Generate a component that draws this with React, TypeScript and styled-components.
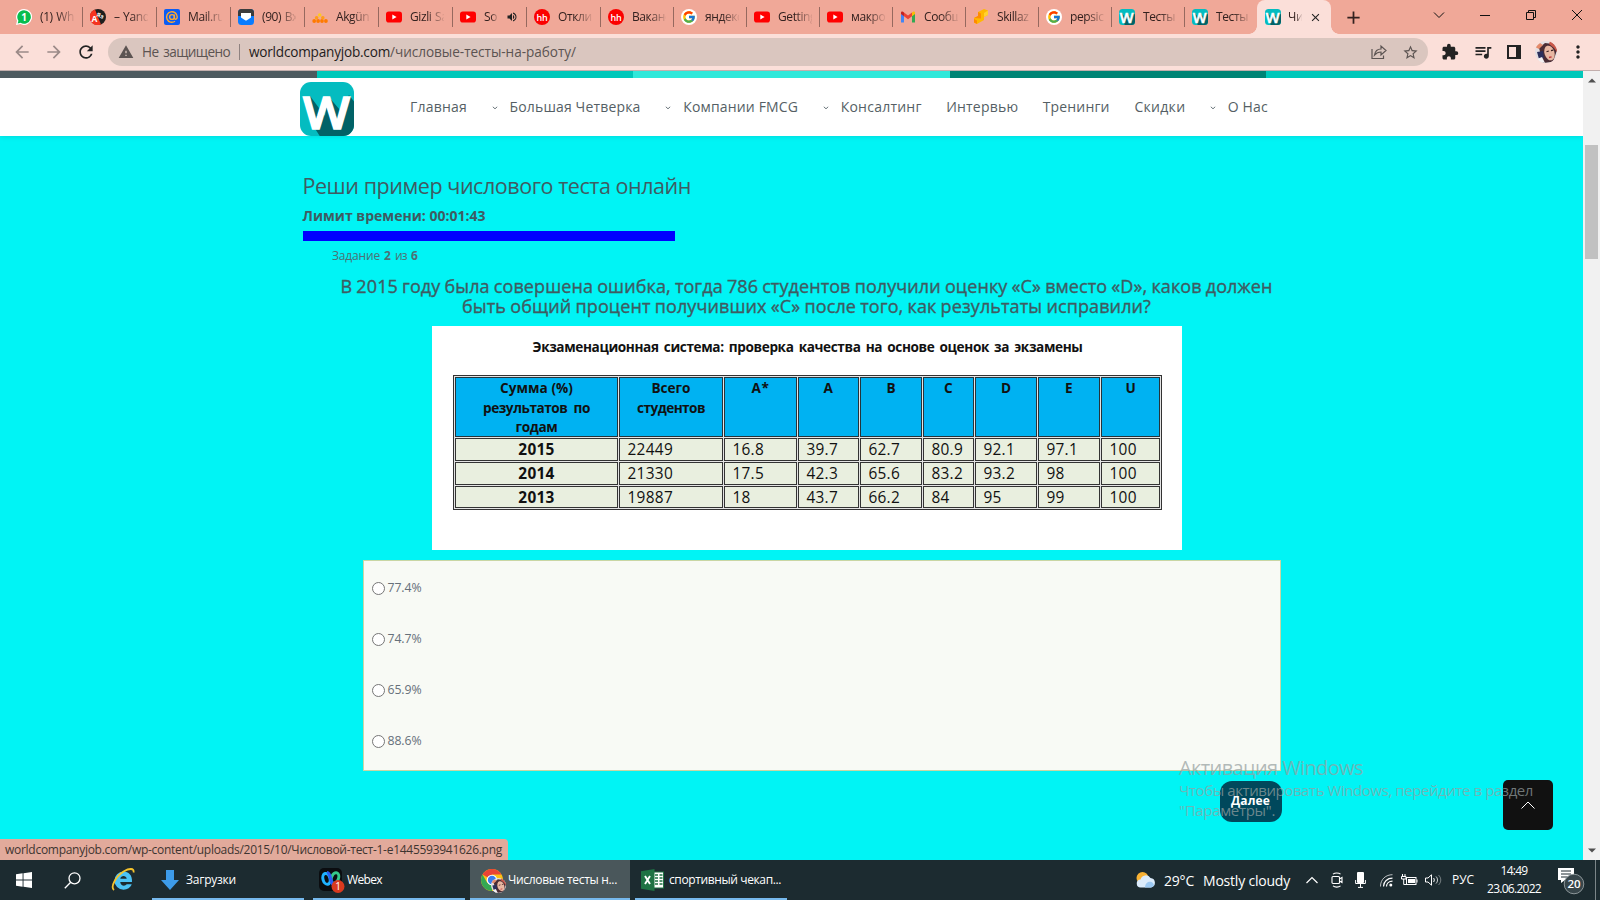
import React, { useLayoutEffect, useRef, useState } from "react";
import styled, { createGlobalStyle } from "styled-components";
import {
  MdArrowBack, MdArrowForward, MdRefresh, MdWarning, MdStarBorder,
  MdExtension, MdQueueMusic, MdMoreVert, MdVolumeUp, MdClose, MdAdd,
} from "react-icons/md";
import { FcGoogle } from "react-icons/fc";

const ui = `"Open Sans", "Noto Sans", sans-serif`;

const Global = createGlobalStyle`
  * { box-sizing: border-box; }
  body { margin: 0; overflow: hidden; font-family: ${ui}; }
  svg { display: block; flex: none; }
`;

/* ---------- text of a given width ---------- */
const FitSpan = styled.span<{ $w: number }>`
  display: block;
  flex: none;
  width: ${(p) => p.$w}px;
  white-space: nowrap;
`;
const FitInner = styled.span`
  display: inline-block;
  white-space: pre;
`;
function Fit({ w, children }: { w: number; children: string }) {
  const ref = useRef<HTMLSpanElement>(null);
  const [ls, setLs] = useState(0);
  useLayoutEffect(() => {
    const el = ref.current;
    if (el) setLs((w - el.getBoundingClientRect().width) / children.length);
  }, []);
  return (
    <FitSpan $w={w}>
      <FitInner ref={ref} style={{ letterSpacing: `${ls}px` }}>{children}</FitInner>
    </FitSpan>
  );
}

const Screen = styled.div`
  width: 1600px;
  height: 900px;
  display: flex;
  flex-direction: column;
  overflow: hidden;
  background: #00f4f5;
`;

/* ---------- tab strip ---------- */
const TabStrip = styled.div`
  height: 34px;
  flex: none;
  display: flex;
  padding-left: 9px;
  background: #f0a898;
`;
const Tab = styled.div<{ $w: number; $line: boolean }>`
  width: ${(p) => p.$w}px;
  flex: none;
  height: 34px;
  display: flex;
  align-items: center;
  padding-left: 7px;
  gap: 8px;
  background: ${(p) => (p.$line ? "linear-gradient(#96695f, #96695f) right 0 top 7px / 1px 20px no-repeat" : "none")};
  color: #33211f;
`;
const ActiveTab = styled(Tab)`
  position: relative;
  background: #fbdfd9;
  border-radius: 8px 8px 0 0;
  padding-left: 8px;
  gap: 7px;
  &::before, &::after {
    content: "";
    position: absolute;
    bottom: 0;
    width: 8px;
    height: 8px;
  }
  &::before { left: -8px; background: radial-gradient(circle at 0 0, transparent 7.5px, #fbdfd9 8px); }
  &::after { right: -8px; background: radial-gradient(circle at 100% 0, transparent 7.5px, #fbdfd9 8px); }
`;
const TabText = styled.span<{ $w: number }>`
  width: ${(p) => p.$w}px;
  flex: none;
  overflow: hidden;
  white-space: nowrap;
  font-size: 12px;
  letter-spacing: -0.4px;
  word-spacing: 0.8px;
  line-height: 20px;
  mask-image: linear-gradient(to right, #000 50%, transparent 105%);
`;
const WinControls = styled.div`
  margin-left: auto;
  display: flex;
  height: 29px;
  align-items: center;
`;
const WinButton = styled.div`
  width: 46px;
  display: flex;
  justify-content: center;
`;
const NewTab = styled.div`
  margin-left: 12px;
  display: flex;
  align-items: center;
  color: #33211f;
`;

/* ---------- toolbar ---------- */
const Toolbar = styled.div`
  height: 37px;
  flex: none;
  display: flex;
  align-items: center;
  padding-left: 12px;
  background: #fbdfd9;
  border-bottom: 1px solid #c2aeac;
  color: #232323;
`;
const NavIcons = styled.div`
  display: flex;
  gap: 12px;
  width: 96px;
  flex: none;
`;
const Dim = styled.span`
  display: flex;
  color: #9b8a88;
`;
const Omnibox = styled.div`
  width: 1320px;
  height: 28px;
  flex: none;
  border-radius: 14px;
  background: #dac6bf;
  display: flex;
  align-items: center;
  padding-left: 10px;
  font-size: 13.6px;
  line-height: 20px;
  color: #5c5452;
`;
const OmniText = styled.span`
  margin-left: 8px;
  word-spacing: 2px;
`;
const OmniSep = styled.span`
  width: 1px;
  height: 16px;
  margin: 0 9px;
  background: #8f8280;
`;
const Url = styled.span`
  display: flex;
  b { font-weight: 400; color: #1f1c1c; }
`;
const OmniEnd = styled.span`
  margin-left: auto;
  display: flex;
  align-items: center;
  gap: 15px;
  padding-right: 9.5px;
  color: #5c5452;
`;
const ToolIcons = styled.div`
  display: flex;
  align-items: center;
  gap: 14px;
  padding-left: 13px;
`;
const MenuDots = styled.span`
  margin-left: -3px;
`;

/* ---------- page ---------- */
const Viewport = styled.div`
  position: relative;
  height: 789px;
  flex: none;
  display: flex;
`;
const Page = styled.div`
  width: 1583px;
  flex: none;
`;
const Stripes = styled.div`
  height: 7px;
  display: grid;
  grid-template-columns: repeat(5, 1fr);
`;
const Stripe = styled.div<{ $c: string }>`
  background: ${(p) => p.$c};
`;
const Header = styled.div`
  height: 58px;
  display: flex;
  align-items: center;
  padding-left: 300px;
  background: #fff;
  box-shadow: 0 1px 5px rgba(0, 0, 0, 0.1);
`;
const LogoWrap = styled.div`
  padding-top: 4px;
  width: 110px;
  flex: none;
`;
const Menu = styled.div`
  display: flex;
  align-items: center;
  font-size: 14px;
  line-height: 20px;
  color: #555f65;
`;
const MenuItem = styled.div<{ $gap: number }>`
  margin-left: ${(p) => p.$gap}px;
  display: flex;
  align-items: center;
`;
const Caret = styled.svg`
  margin: 2px 12px 0 0;
`;
const Quiz = styled.div`
  padding: 36px 0 0 302.5px;
  color: #3f5b62;
`;
const Title = styled.h2`
  margin: 0 0 6px;
  font-weight: 400;
  font-size: 21.5px;
  line-height: 28px;
`;
const Timer = styled.div`
  font-weight: 700;
  font-size: 14px;
  line-height: 20px;
`;
const Progress = styled.div`
  margin: 5px 0 5px .5px;
  width: 372px;
  height: 10px;
  background: #00f;
`;
const TaskNo = styled.div`
  display: flex;
  padding-left: 29.5px;
  font-size: 12px;
  line-height: 20px;
  color: #4d7074;
`;
const Strong = styled.b`
  margin: 0 4px;
`;
const Question = styled.div`
  margin-top: 10px;
  width: 1008px;
  display: flex;
  flex-direction: column;
  align-items: center;
  font-weight: 500;
  font-size: 18px;
  line-height: 20px;
  word-spacing: -0.6px;
  -webkit-text-stroke: 0.35px currentColor;
`;
const Sheet = styled.div`
  margin: 10px 0 0 129.5px;
  width: 750px;
  height: 224px;
  padding: 11px 20px 0 21px;
  background: #fff;
  color: #111;
`;
const SheetTitle = styled.div`
  display: flex;
  justify-content: center;
  font-weight: 700;
  font-size: 13.6px;
  line-height: 20px;
  word-spacing: 2px;
  margin-bottom: 18px;
`;
const Grid = styled.div`
  width: 709px;
  height: 135px;
  border: 1px solid #333;
  padding: 1px;
  display: grid;
  grid-template-columns: 163px 104px 73px 61px 62px 51px 62px 62px 59px;
  grid-template-rows: 60px 23px 23px 22px;
  gap: 1px;
  background: #e4e4e4;
`;
const HeadCell = styled.div`
  border: 1px solid #24343c;
  background: #00b2f2;
  display: flex;
  flex-direction: column;
  align-items: center;
  font-weight: 700;
  font-size: 13.6px;
  line-height: 19.6px;
`;
const Cell = styled.div<{ $head?: boolean }>`
  border: 1px solid #333;
  background: #e9efdf;
  display: flex;
  padding-left: ${(p) => (p.$head ? 0 : 7.5)}px;
  justify-content: ${(p) => (p.$head ? "center" : "flex-start")};
  font-weight: ${(p) => (p.$head ? 700 : 400)};
  font-size: 15.4px;
  line-height: 22px;
`;
const Answers = styled.div`
  margin: 10px 0 0 60.5px;
  width: 918px;
  height: 211px;
  padding: 17px 0 0 8px;
  border: 1px solid #c9d6a4;
  background: #f8faf5;
`;
const Answer = styled.label`
  display: flex;
  align-items: center;
  height: 20px;
  margin-bottom: 31px;
  font-size: 12.3px;
  line-height: 20px;
  color: #66707a;
`;
const Radio = styled.span`
  width: 13px;
  height: 13px;
  flex: none;
  margin: 1px 2.5px 0 0;
  border: 1px solid #767676;
  border-radius: 50%;
  background: #fff;
`;
const Next = styled.div`
  margin: 10px 0 0 917.5px;
  width: 62px;
  height: 41px;
  border-radius: 12px;
  background: #00485c;
  color: #fff;
  font-weight: 700;
  font-size: 12px;
  line-height: 39px;
  padding-left: 11px;
`;
const ToTop = styled.div`
  position: absolute;
  left: 1503px;
  top: 709px;
  width: 50px;
  height: 50px;
  border-radius: 5px;
  background: #111;
  display: flex;
  align-items: center;
  justify-content: center;
`;
const Watermark = styled.div`
  position: absolute;
  left: 1179px;
  top: 683px;
  color: rgba(150, 160, 160, 0.72);
  font-size: 15px;
  line-height: 20px;
`;
const WatermarkTitle = styled.div`
  font-size: 20px;
  line-height: 28px;
  margin-bottom: -2px;
`;
const StatusBubble = styled.div`
  position: absolute;
  left: 0;
  bottom: 0;
  width: 508px;
  height: 21px;
  padding-left: 5px;
  border-radius: 0 4px 0 0;
  background: #e2aa9b;
  color: #3e3531;
  font-size: 12px;
  line-height: 22px;
`;
const Scrollbar = styled.div`
  width: 17px;
  background: #f1f1f1;
  display: flex;
  flex-direction: column;
  align-items: center;
  padding: 7px 0;
`;
const Thumb = styled.div`
  width: 13px;
  height: 114px;
  margin-top: 62px;
  margin-bottom: auto;
  background: #c1c1c1;
`;

/* ---------- taskbar ---------- */
const Taskbar = styled.div`
  height: 40px;
  flex: none;
  display: flex;
  background: #1c2b30;
  color: #fff;
  font-size: 12px;
  line-height: 20px;
`;
const Launcher = styled.div<{ $w: number }>`
  width: ${(p) => p.$w}px;
  flex: none;
  display: flex;
  align-items: center;
  justify-content: center;
`;
const Task = styled.div<{ $w: number; $gap: number; $active?: boolean }>`
  width: ${(p) => p.$w}px;
  flex: none;
  margin-left: ${(p) => p.$gap}px;
  display: flex;
  align-items: center;
  padding-top: 2px;
  border-bottom: 2px solid #76b9ed;
  background: ${(p) => (p.$active ? "#4a575b" : "transparent")};
`;
const TaskIcon = styled.span<{ $l: number; $w: number }>`
  margin-left: ${(p) => p.$l}px;
  width: ${(p) => p.$w}px;
  flex: none;
`;
const Tray = styled.div`
  margin-left: auto;
  display: flex;
  align-items: center;
  width: 465px;
  flex: none;
`;
const Weather = styled.div`
  display: flex;
  gap: 9px;
  font-size: 14px;
  margin: 2px 16px 0 7px;
`;
const TrayIcon = styled.span<{ $r: number }>`
  margin-right: ${(p) => p.$r}px;
`;
const Clock = styled.div`
  margin-left: 13px;
  width: 54px;
  display: flex;
  flex-direction: column;
  align-items: center;
  line-height: 18px;
`;
const ShowDesktop = styled.div`
  margin-left: auto;
  width: 5px;
  height: 40px;
  border-left: 1px solid #7b8588;
`;
const ChromeBox = styled.span`
  position: relative;
  display: block;
  width: 24px;
`;
const ChromeFace = styled.span`
  position: absolute;
  left: 10px;
  top: 9px;
`;
const Notify = styled.span`
  margin-left: 16px;
`;

/* ---------- drawings ---------- */
const LogoW = ({ size, r = 11 }: { size: number; r?: number }) => (
  <svg width={size} height={size} viewBox="0 0 54 54">
    <defs>
      <clipPath id={`lw${size}`}><rect width="54" height="54" rx={r} /></clipPath>
    </defs>
    <g clipPath={`url(#lw${size})`}>
      <rect width="54" height="54" fill="#04bcc0" />
      <path d="M10 14 L25 34 L28 14 L40 28 L49 13 L56 22 V56 H21 L14 45 Z" fill="#026267" />
      <text x="26.500" y="46.800" textAnchor="middle" fontFamily="Open Sans" fontWeight="600" fontSize="46" fill="#fff" stroke="#fff" strokeWidth="1.600" textLength="47" lengthAdjust="spacingAndGlyphs">W</text>
    </g>
  </svg>
);
const Svg16 = ({ children }: { children: React.ReactNode }) => (
  <svg width="16" height="16" viewBox="0 0 16 16">{children}</svg>
);
const WhatsApp = () => (
  <Svg16>
    <path d="M8 0a8 8 0 1 1-3.600 15.100L0 16l1-4.200A8 8 0 0 1 8 0z" fill="#fff" />
    <path d="M8 1.200A6.800 6.800 0 1 1 4.500 13.800L1.700 14.400l.7-2.700A6.800 6.800 0 0 1 8 1.200z" fill="#07bd4e" />
    <text x="8" y="11.700" textAnchor="middle" fontFamily="Open Sans" fontSize="10" fontWeight="700" fill="#fff">1</text>
  </Svg16>
);
const Yandex = () => (
  <Svg16>
    <circle cx="8" cy="8" r="8" fill="#1e1e1e" />
    <path d="M5 .6A8 8 0 1 0 11 15.400z" fill="#f5341f" />
    <text x="1.400" y="13" fontFamily="Open Sans" fontSize="8.500" fontWeight="700" fill="#fff">A</text>
    <text x="6.500" y="8" fontFamily="Open Sans" fontSize="6" fontWeight="700" fill="#fff" transform="rotate(20 8 6)">Яз</text>
  </Svg16>
);
const MailRu = () => (
  <Svg16>
    <rect width="16" height="16" rx="2" fill="#0a5cf5" />
    <circle cx="8" cy="8" r="2.400" fill="none" stroke="#ffa930" strokeWidth="1.400" />
    <path d="M10.400 5.600v3.200c0 2 2.800 2 2.800-.8A5.300 5.300 0 1 0 11 12.300" fill="none" stroke="#ffa930" strokeWidth="1.400" />
  </Svg16>
);
const Inbox = () => (
  <Svg16>
    <rect width="16" height="16" rx="3.500" fill="#0a7cff" />
    <path d="M0 7V3.500A3.500 3.500 0 0 1 3.500 0h9A3.500 3.500 0 0 1 16 3.500V7z" fill="#3c3c3c" />
    <path d="M3 4h10V8.500L8.500 11.500h-1L3 8.500z" fill="#fff" />
  </Svg16>
);
const Dots = () => (
  <Svg16>
    <g fill="#ff7a00">
      <circle cx="2.200" cy="12" r="1.900" /><circle cx="6.100" cy="12" r="1.900" /><circle cx="10" cy="12" r="1.900" /><circle cx="13.900" cy="12" r="1.900" />
      <circle cx="4.600" cy="8.800" r="1.800" fill="#ff9c1a" /><circle cx="10.800" cy="8.800" r="1.800" fill="#ff9c1a" />
      <circle cx="7.700" cy="6" r="1.800" fill="#ffc91f" />
    </g>
  </Svg16>
);
const YouTube = () => (
  <Svg16>
    <rect y="2.500" width="16" height="11" rx="2.800" fill="#f00" />
    <path d="M6.300 5.600v4.800L10.600 8z" fill="#fff" />
  </Svg16>
);
const HeadHunter = () => (
  <Svg16>
    <circle cx="8" cy="8" r="8" fill="#fb0000" />
    <text x="8" y="11.500" textAnchor="middle" fontFamily="Open Sans" fontSize="9" fontWeight="600" letterSpacing="-0.3" fill="#fff">hh</text>
  </Svg16>
);
const GoogleRound = styled.span`
  width: 16px;
  height: 16px;
  flex: none;
  border-radius: 50%;
  background: #fff;
  padding: 1px;
`;
const Google = () => <GoogleRound><FcGoogle size={14} /></GoogleRound>;
const Gmail = () => (
  <Svg16>
    <path d="M1 13.500V4.500l3 2.200v6.800z" fill="#4285f4" />
    <path d="M12 13.500V6.700l3-2.200v9z" fill="#34a853" />
    <path d="M12 3.500l1-.8c1-.6 2 0 2 1v1.300l-3 2.200z" fill="#fbbc04" />
    <path d="M4 3.500L8 6.600l4-3.100v3.700l-4 3-4-3z" fill="#ea4335" />
    <path d="M4 3.500l-1-.8c-1-.6-2 0-2 1v1.300l3 2.200z" fill="#c5221f" />
  </Svg16>
);
const Skillaz = () => (
  <Svg16>
    <path d="M5 3l6-3 4 1.500V6l-4 2v3l-7 4-3-1.500V9l4-2z" fill="#ffb800" />
    <path d="M5 3l3 1.500v5L1 9l4-2zM1 10l3 1.500V15l-3-1.500z" fill="#ff8a00" />
    <path d="M11 4l4-2.500V6l-4 2z" fill="#ffd22e" />
  </Svg16>
);
const FaceArt = ({ size }: { size: number }) => (
  <svg width={size} height={size} viewBox="0 0 22 22">
    <defs><clipPath id={`fa${size}`}><circle cx="11" cy="11" r="11" /></clipPath></defs>
    <g clipPath={`url(#fa${size})`}>
      <rect width="22" height="22" fill="#e4dfe2" />
      <path d="M4 7l6-5 8 1 4 6-4 12-10 1z" fill="#4a2c34" />
      <path d="M2 11l6-1 1 7-5 1z" fill="#2b2f5c" />
      <path d="M0 6l5-4 3 2-4 4z" fill="#e58a6a" />
      <path d="M2 18l5-2 3 6H3z" fill="#f4f1f2" />
      <ellipse cx="14.500" cy="12" rx="5" ry="7.500" transform="rotate(-18 14.500 12)" fill="#e8b7a2" />
      <path d="M11.500 10.800l2.300-.8M16 9.600l2.300-.5" stroke="#3a2222" strokeWidth="1.100" />
      <path d="M14 16.500l2.600-.6" stroke="#c0393d" strokeWidth="1.300" />
      <path d="M15 0l7 5v6l-3-4-5-4z" fill="#c9584a" />
    </g>
  </svg>
);

type TabInfo = { icon: React.ReactNode; text: string; w: number; muted?: boolean };
const tabs: TabInfo[] = [
  { icon: <WhatsApp />, text: "(1) Wha", w: 74 },
  { icon: <Yandex />, text: "– Yande", w: 74 },
  { icon: <MailRu />, text: "Mail.ru:", w: 74 },
  { icon: <Inbox />, text: "(90) Вхо", w: 74 },
  { icon: <Dots />, text: "Akgün ", w: 74 },
  { icon: <YouTube />, text: "Gizli Sak", w: 74 },
  { icon: <YouTube />, text: "Son", w: 74, muted: true },
  { icon: <HeadHunter />, text: "Отклик", w: 74 },
  { icon: <HeadHunter />, text: "Ваканс", w: 73 },
  { icon: <Google />, text: "яндекс", w: 73 },
  { icon: <YouTube />, text: "Getting", w: 73 },
  { icon: <YouTube />, text: "макрос", w: 73 },
  { icon: <Gmail />, text: "Сообщ", w: 73 },
  { icon: <Skillaz />, text: "Skillaz", w: 73 },
  { icon: <Google />, text: "pepsico", w: 73 },
  { icon: <LogoW size={16} r={12} />, text: "Тесты ", w: 73 },
  { icon: <LogoW size={16} r={12} />, text: "Тесты ", w: 72 },
];

const menu = [
  { t: "Главная", w: 57, gap: 0, caret: false },
  { t: "Большая Четверка", w: 131, gap: 24.5, caret: true },
  { t: "Компании FMCG", w: 115, gap: 24.7, caret: true },
  { t: "Консалтинг", w: 81, gap: 24.5, caret: true },
  { t: "Интервью", w: 72, gap: 24.5, caret: false },
  { t: "Тренинги", w: 67, gap: 24.5, caret: false },
  { t: "Скидки", w: 51, gap: 24.7, caret: false },
  { t: "О Нас", w: 40, gap: 24.4, caret: true },
];

const heads: { t: string; w: number }[][] = [
  [{ t: "Сумма (%)", w: 73 }, { t: "результатов  по", w: 107 }, { t: "годам", w: 42 }],
  [{ t: "Всего", w: 39 }, { t: "студентов", w: 68 }],
  [{ t: "A*", w: 18 }], [{ t: "A", w: 10 }], [{ t: "B", w: 9 }], [{ t: "C", w: 9 }],
  [{ t: "D", w: 10 }], [{ t: "E", w: 8 }], [{ t: "U", w: 10 }],
];
const rows = [
  ["2015", "22449", "16.8", "39.7", "62.7", "80.9", "92.1", "97.1", "100"],
  ["2014", "21330", "17.5", "42.3", "65.6", "83.2", "93.2", "98", "100"],
  ["2013", "19887", "18", "43.7", "66.2", "84", "95", "99", "100"],
];
const numWidth = (s: string) => (s.includes(".") ? 31.5 : s.length * 9.1);

export default function App() {
  return (
    <Screen>
      <Global />
      <TabStrip>
        {tabs.map((t, i) => (
          <Tab key={i} $w={t.w} $line={i < tabs.length - 1}>
            {t.icon}
            <TabText $w={t.muted ? 14 : 34}>{t.text}</TabText>
            {t.muted && <MdVolumeUp size={12} color="#222" />}
          </Tab>
        ))}
        <ActiveTab $w={74} $line={false}>
          <LogoW size={16} r={12} />
          <TabText $w={14}>Чис</TabText>
          <MdClose size={13} color="#222" />
        </ActiveTab>
        <NewTab><MdAdd size={21} /></NewTab>
        <WinControls>
          <WinButton><svg width="12" height="12" viewBox="0 0 12 12"><path d="M1 3.500l5 5 5-5" fill="none" stroke="#111" /></svg></WinButton>
          <WinButton><svg width="10" height="12" viewBox="0 0 10 12"><path d="M0 6.500h10" stroke="#111" /></svg></WinButton>
          <WinButton><svg width="10" height="10" viewBox="0 0 10 10"><path d="M.5 2.500h7v7h-7zM2.500 2.500v-2h7v7h-2" fill="none" stroke="#111" /></svg></WinButton>
          <WinButton><svg width="10" height="10" viewBox="0 0 10 10"><path d="M0 0l10 10M10 0L0 10" stroke="#111" /></svg></WinButton>
        </WinControls>
      </TabStrip>

      <Toolbar>
        <NavIcons>
          <Dim><MdArrowBack size={20} /></Dim>
          <Dim><MdArrowForward size={20} /></Dim>
          <MdRefresh size={20} />
        </NavIcons>
        <Omnibox>
          <MdWarning size={16} />
          <OmniText><Fit w={88}>Не защищено</Fit></OmniText>
          <OmniSep />
          <Url>
            <b><Fit w={141}>worldcompanyjob.com</Fit></b>
            <Fit w={186}>/числовые-тесты-на-работу/</Fit>
          </Url>
          <OmniEnd>
            <svg width="16" height="16" viewBox="0 0 16 16" fill="none" stroke="currentColor" strokeWidth="1.200">
              <path d="M1 5v9.500h11.500v-3" /><path d="M3.500 11C4.200 7 6.500 5 10 5V2l5 4.500L10 11V8C7.500 8 5.500 8.700 3.500 11z" />
            </svg>
            <MdStarBorder size={17} />
          </OmniEnd>
        </Omnibox>
        <ToolIcons>
          <MdExtension size={18} />
          <MdQueueMusic size={20} />
          <svg width="14" height="14" viewBox="0 0 14 14"><path d="M1 1h12v12H1z" fill="none" stroke="currentColor" strokeWidth="2" /><path d="M9 1h4v12H9z" fill="currentColor" /></svg>
          <FaceArt size={22} />
          <MenuDots><MdMoreVert size={20} /></MenuDots>
        </ToolIcons>
      </Toolbar>

      <Viewport>
        <Page>
          <Stripes>
            <Stripe $c="#4d5a5f" /><Stripe $c="#00c8ba" /><Stripe $c="#30e8da" /><Stripe $c="#008475" /><Stripe $c="#00c8ba" />
          </Stripes>
          <Header>
            <LogoWrap><LogoW size={54} /></LogoWrap>
            <Menu>
              {menu.map((m) => (
                <MenuItem key={m.t} $gap={m.gap}>
                  {m.caret && (
                    <Caret width="6" height="4" viewBox="0 0 6 4"><path d="M.8.8L3 2.800 5.200.8" fill="none" stroke="#5b676d" strokeWidth=".9" /></Caret>
                  )}
                  <Fit w={m.w}>{m.t}</Fit>
                </MenuItem>
              ))}
            </Menu>
          </Header>
          <Quiz>
            <Title><Fit w={388.5}>Реши пример числового теста онлайн</Fit></Title>
            <Timer><Fit w={183}>Лимит времени: 00:01:43</Fit></Timer>
            <Progress />
            <TaskNo>
              <Fit w={48}>Задание</Fit><Strong>2</Strong><Fit w={12}>из</Fit><Strong>6</Strong>
            </TaskNo>
            <Question>
              <Fit w={932}>В 2015 году была совершена ошибка, тогда 786 студентов получили оценку «C» вместо «D», каков должен</Fit>
              <Fit w={689}>быть общий процент получивших «C» после того, как результаты исправили?</Fit>
            </Question>
            <Sheet>
              <SheetTitle><Fit w={550}>Экзаменационная система: проверка качества на основе оценок за экзамены</Fit></SheetTitle>
              <Grid>
                {heads.map((h, i) => (
                  <HeadCell key={i}>{h.map((l) => <Fit key={l.t} w={l.w}>{l.t}</Fit>)}</HeadCell>
                ))}
                {rows.map((r) => r.map((v, i) => (
                  <Cell key={r[0] + i} $head={i === 0}><Fit w={numWidth(v)}>{v}</Fit></Cell>
                )))}
              </Grid>
            </Sheet>
            <Answers>
              {["77.4%", "74.7%", "65.9%", "88.6%"].map((a) => (
                <Answer key={a}><Radio /><Fit w={34}>{a}</Fit></Answer>
              ))}
            </Answers>
            <Next><Fit w={39}>Далее</Fit></Next>
          </Quiz>
        </Page>
        <Scrollbar>
          <svg width="8" height="5" viewBox="0 0 8 5"><path d="M0 4.500L4 .5l4 4z" fill="#505050" /></svg>
          <Thumb />
          <svg width="8" height="5" viewBox="0 0 8 5"><path d="M0 .5l4 4 4-4z" fill="#505050" /></svg>
        </Scrollbar>
        <ToTop>
          <svg width="14" height="8" viewBox="0 0 14 8"><path d="M.5 7.500L7 1l6.500 6.500" fill="none" stroke="#fff" /></svg>
        </ToTop>
        <Watermark>
          <WatermarkTitle><Fit w={184}>Активация Windows</Fit></WatermarkTitle>
          <Fit w={354}>Чтобы активировать Windows, перейдите в раздел</Fit>
          <Fit w={96}>"Параметры".</Fit>
        </Watermark>
        <StatusBubble><Fit w={497}>worldcompanyjob.com/wp-content/uploads/2015/10/Числовой-тест-1-e1445593941626.png</Fit></StatusBubble>
      </Viewport>

      <Taskbar>
        <Launcher $w={48}>
          <svg width="16" height="16" viewBox="0 0 16 16" fill="#fff"><path d="M0 2.200L6.600 1.300v6.200H0zM7.500 1.200L16 0v7.500H7.500zM0 8.400h6.600v6.300L0 13.800zM7.500 8.400H16V16l-8.500-1.200z" /></svg>
        </Launcher>
        <Launcher $w={48}>
          <svg width="17" height="17" viewBox="0 0 17 17" fill="none" stroke="#fff" strokeWidth="1.300"><circle cx="10.500" cy="6.300" r="5.500" /><path d="M6.700 10.200L.8 16.200" /></svg>
        </Launcher>
        <Launcher $w={54}>
          <svg width="24" height="24" viewBox="0 0 24 24">
            <path d="M4 14H21C21.500 7 17.500 3.500 12.500 3.500A9 9 0 0 0 12.500 21.700C16.500 21.700 19.500 19.500 20.700 16.300H15.700C14 18.800 9.500 18 9.200 14M9.300 10.700C9.800 7.200 15.300 7.200 15.700 10.700z" fill="#4cc3f5" fillRule="evenodd" />
            <path d="M3 22C-1 19 5 8 13 3.200C18 .3 23.500-.2 22.500 4.500" fill="none" stroke="#f5c32c" strokeWidth="1.800" />
          </svg>
        </Launcher>
        <Task $w={152} $gap={2}>
          <TaskIcon $l={9} $w={25}>
            <svg width="18" height="20" viewBox="0 0 18 20"><path d="M5 0h8v10h5l-9 10L0 10h5z" fill="#3d9be9" /></svg>
          </TaskIcon>
          <Fit w={50}>Загрузки</Fit>
        </Task>
        <Task $w={152} $gap={9}>
          <TaskIcon $l={6} $w={28}>
            <svg width="26" height="26" viewBox="0 0 26 26">
              <rect y="1" width="23" height="23" rx="5" fill="#0b0d10" />
              <ellipse cx="16" cy="11" rx="3.500" ry="5.500" fill="none" stroke="#35c98a" strokeWidth="3" transform="rotate(20 16 11)" />
              <ellipse cx="7.500" cy="12" rx="3.500" ry="5.500" fill="none" stroke="#1fb2ff" strokeWidth="3" transform="rotate(-15 7 12)" />
              <path d="M8 5.500c4 0 3 9 6 12" stroke="#2a5cf0" strokeWidth="3.200" fill="none" />
              <circle cx="19" cy="19.500" r="6.500" fill="#d93a1f" />
              <text x="19" y="23.300" textAnchor="middle" fontFamily="Open Sans" fontSize="10" fill="#fff">1</text>
            </svg>
          </TaskIcon>
          <Fit w={35}>Webex</Fit>
        </Task>
        <Task $w={160} $gap={5} $active>
          <TaskIcon $l={11} $w={27}>
            <ChromeBox>
              <svg width="22" height="22" viewBox="0 0 22 22">
                <circle cx="11" cy="11" r="11" fill="#fbc116" />
                <path d="M11 11L1.500 5.500A11 11 0 0 1 20.500 5.500H11z" fill="#ea4335" />
                <path d="M1.500 5.500L6.200 13.800 11 16l0 6A11 11 0 0 1 1.500 5.500z" fill="#34a853" />
                <circle cx="11" cy="11" r="5.300" fill="#fff" /><circle cx="11" cy="11" r="4.200" fill="#3b7ded" />
              </svg>
              <ChromeFace><FaceArt size={15} /></ChromeFace>
            </ChromeBox>
          </TaskIcon>
          <Fit w={109}>Числовые тесты н...</Fit>
        </Task>
        <Task $w={152} $gap={5}>
          <TaskIcon $l={6} $w={28}>
            <svg width="23" height="22" viewBox="0 0 23 22">
              <rect x="12" y="3" width="10.500" height="16" fill="#fff" stroke="#1f7244" />
              <path d="M14 6h3M18.500 6h3M14 9h3M18.500 9h3M14 12h3M18.500 12h3M14 15h3M18.500 15h3" stroke="#1f7244" strokeWidth="1.600" />
              <path d="M0 2.200L13.500 0v22L0 19.800z" fill="#1f7244" />
              <path d="M4 7l5 8M9 7l-5 8" stroke="#fff" strokeWidth="1.900" />
            </svg>
          </TaskIcon>
          <Fit w={112}>спортивный чекап...</Fit>
        </Task>
        <Tray>
          <svg width="22" height="20" viewBox="0 0 22 20">
            <circle cx="7.500" cy="8" r="6" fill="#f9b233" />
            <path d="M6 17.500a4 4 0 0 1-.5-8A5.500 5.500 0 0 1 15.500 8 4.800 4.800 0 0 1 16 17.500z" fill="#dcecfb" />
            <path d="M10 17.500c0-5 4-6.500 6.500-5.500s4 4.500-.5 5.500z" fill="#9cc9f2" />
          </svg>
          <Weather><Fit w={30}>29°C</Fit><Fit w={87}>Mostly cloudy</Fit></Weather>
          <TrayIcon $r={13}><svg width="12" height="8" viewBox="0 0 12 8"><path d="M.5 7L6 1.500 11.500 7" fill="none" stroke="#fff" strokeWidth="1.200" /></svg></TrayIcon>
          <TrayIcon $r={12}>
            <svg width="12" height="18" viewBox="0 0 12 18" fill="none" stroke="#fff" strokeWidth="1.100"><rect x="1" y="5.500" width="7.500" height="7" rx="1" /><path d="M8.500 8l2.500-1.500v5L8.500 10M2 3.200C4 1.500 7.500 1.500 9.500 3.200M2 14.800c2 1.700 5.500 1.700 7.500 0" /></svg>
          </TrayIcon>
          <TrayIcon $r={14}>
            <svg width="11" height="16" viewBox="0 0 11 16"><rect x="2" width="7" height="11" rx="1" fill="#fff" /><path d="M.6 8v3.500h9.800V8M5.500 12v3M3 15.400h5" fill="none" stroke="#fff" /></svg>
          </TrayIcon>
          <TrayIcon $r={8}>
            <svg width="13" height="13" viewBox="0 0 13 13" fill="none" stroke="#fff"><path d="M.5 12.500C.5 5 6 .7 12.500.7" opacity=".7" /><path d="M3.500 12.500c0-5 4-8.300 9-8.300M6.500 12.500c0-3 2.500-5.300 6-5.300" strokeWidth="1.200" /><circle cx="10.800" cy="11" r="1.500" fill="#fff" stroke="none" /></svg>
          </TrayIcon>
          <TrayIcon $r={7}>
            <svg width="17" height="12" viewBox="0 0 17 12" fill="none" stroke="#fff"><rect x="5.500" y="3.500" width="9.500" height="7" /><rect x="7" y="5" width="7" height="4" fill="#fff" stroke="none" /><path d="M16 5.500v3M1.500 0v2.500M4 0v2.500M.5 2.500h4.500v2.500h-4.500zM2.700 5v5.500h2.500" /></svg>
          </TrayIcon>
          <TrayIcon $r={10}>
            <svg width="17" height="12" viewBox="0 0 17 12" fill="none" stroke="#fff"><path d="M.5 4h2.500L6.500.8v10.400L3 8H.5z" /><path d="M8.500 4c1 1 1 3 0 4" /><path d="M11 2.500c2 2 2 5 0 7" opacity=".8" /><path d="M13.500 1c3 3 3 7 0 10" opacity=".4" /></svg>
          </TrayIcon>
          <Fit w={22}>РУС</Fit>
          <Clock><Fit w={27}>14:49</Fit><Fit w={54}>23.06.2022</Fit></Clock>
          <Notify>
            <svg width="28" height="32" viewBox="0 -1 28 32">
              <path d="M1 3h16v12H8l-4 3v-3H1z" fill="#fff" />
              <path d="M4 6h10M4 9h10M4 12h6" stroke="#1c2b30" />
              <circle cx="17" cy="19" r="9.800" fill="#37454a" stroke="#8b9598" />
              <text x="17" y="23.300" textAnchor="middle" fontFamily="Open Sans" fontSize="11.500" fontWeight="600" fill="#fff">20</text>
            </svg>
          </Notify>
          <ShowDesktop />
        </Tray>
      </Taskbar>
    </Screen>
  );
}
